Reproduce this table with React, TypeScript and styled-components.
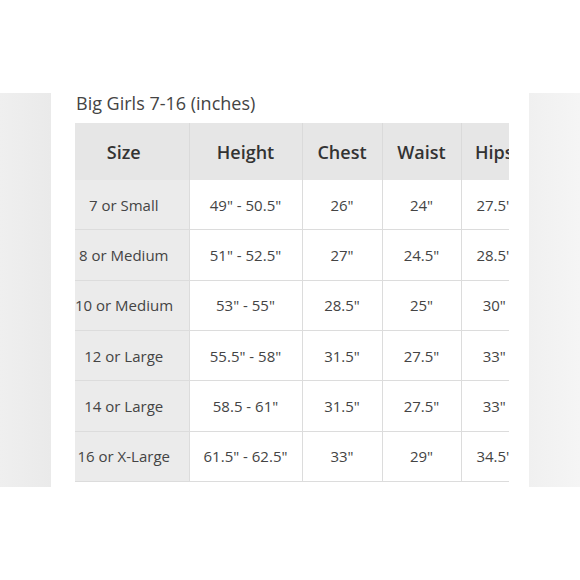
import styled, { createGlobalStyle } from 'styled-components';

const GlobalStyle = createGlobalStyle`
  body {
    margin: 0;
    background: #fff;
    font-family: 'Open Sans', 'Liberation Sans', sans-serif;
  }
`;

const columns = ['Size', 'Height', 'Chest', 'Waist', 'Hips'];
const widths = [114, 113, 80, 79, 66];

const rows = [
  ['7 or Small', '49" - 50.5"', '26"', '24"', '27.5"'],
  ['8 or Medium', '51" - 52.5"', '27"', '24.5"', '28.5"'],
  ['10 or Medium', '53" - 55"', '28.5"', '25"', '30"'],
  ['12 or Large', '55.5" - 58"', '31.5"', '27.5"', '33"'],
  ['14 or Large', '58.5 - 61"', '31.5"', '27.5"', '33"'],
  ['16 or X-Large', '61.5" - 62.5"', '33"', '29"', '34.5"'],
];

export default function App() {
  return (
    <>
      <GlobalStyle />
      <Page>
        <SidePanel $side="left" />
        <Content>
          <Title>Big Girls 7-16 (inches)</Title>
          <TableClip>
            <Table>
              <colgroup>
                {widths.map((w, i) => (
                  <col key={i} style={{ width: w }} />
                ))}
              </colgroup>
              <thead>
                <tr>
                  {columns.map((c) => (
                    <HeadCell key={c}>{c}</HeadCell>
                  ))}
                </tr>
              </thead>
              <tbody>
                {rows.map((r) => (
                  <tr key={r[0]}>
                    {r.map((v, i) => (
                      <Cell key={i} $label={i === 0}>
                        {v}
                      </Cell>
                    ))}
                  </tr>
                ))}
              </tbody>
            </Table>
          </TableClip>
        </Content>
        <SidePanel $side="right" />
      </Page>
    </>
  );
}

const Page = styled.div`
  display: grid;
  grid-template-columns: 51px 1fr 51px;
  width: 580px;
  height: 580px;
  background: #fff;
`;

const SidePanel = styled.div<{ $side: 'left' | 'right' }>`
  margin-top: 93px;
  height: 394px;
  background: ${({ $side }) =>
    $side === 'left'
      ? 'linear-gradient(90deg, #efefef, #eaeaea)'
      : 'linear-gradient(90deg, #f0f0f0, #f5f5f5)'};
`;

const Content = styled.div`
  padding: 91px 0 0 24px;
`;

const Title = styled.div`
  margin-left: 1px;
  height: 32px;
  font-size: 18px;
  line-height: 24px;
  color: #444;
`;

const TableClip = styled.div`
  width: 434px;
  overflow: hidden;
`;

const Table = styled.table`
  border-collapse: collapse;
  table-layout: fixed;
  width: ${widths.reduce((a, b) => a + b, 0)}px;
  white-space: nowrap;
`;

const HeadCell = styled.th`
  height: 57px;
  padding: 0;
  background: #e6e6e6;
  border-left: 1px solid #dadada;
  font-size: 18px;
  font-weight: 600;
  color: #333;
  text-align: center;

  &:first-child {
    border-left: none;
    padding-right: 16px;
  }
`;

const Cell = styled.td<{ $label: boolean }>`
  height: 49.33px;
  padding: 0;
  background: ${({ $label }) => ($label ? '#ebebeb' : '#fff')};
  border-left: 1px solid #dcdcdc;
  border-bottom: 1px solid #dcdcdc;
  font-size: 15px;
  color: #444;
  text-align: center;

  &:first-child {
    border-left: none;
    padding-right: 16px;
  }
`;
